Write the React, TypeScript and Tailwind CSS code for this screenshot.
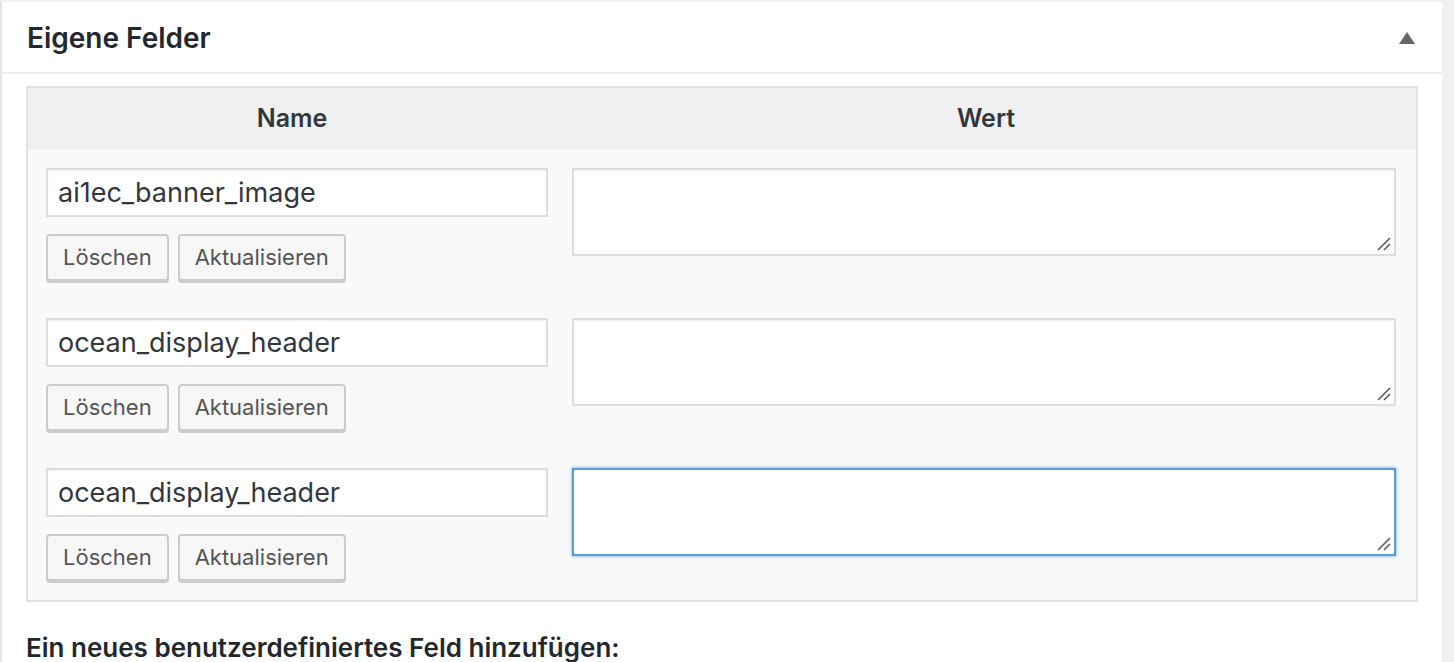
import React from "react";

const rows = [
  { key: "ai1ec_banner_image", focused: false },
  { key: "ocean_display_header", focused: false },
  { key: "ocean_display_header", focused: true },
];

function Grip() {
  return (
    <svg width="14" height="14" viewBox="0 0 14 14" className="pointer-events-none absolute bottom-[5px] right-[25px]">
      <path d="M1 13 L13 1 M7 13 L13 7" stroke="#555555" strokeWidth="1.5" />
    </svg>
  );
}

function MetaRow({ name, focused }: { name: string; focused: boolean }) {
  return (
    <div className="grid grid-cols-[528px_1fr]">
      <div className="pb-[19px] pl-[18px] pr-[8px] pt-[18px]">
        <input
          type="text"
          defaultValue={name}
          className="h-[49px] w-full border-2 border-[#dddddd] bg-white px-[10px] text-[27px] text-[#32373c] shadow-[inset_0_1px_2px_rgba(0,0,0,.07)] outline-none"
        />
        <div className="mt-[17px] flex gap-[9px]">
          <button className="h-[47px] rounded-[4px] border-2 border-[#cccccc] bg-[#f7f7f7] px-[15px] text-[22px] text-[#555555] shadow-[0_2px_0_#cccccc]">
            Löschen
          </button>
          <button className="h-[47px] rounded-[4px] border-2 border-[#cccccc] bg-[#f7f7f7] px-[15px] text-[22px] text-[#555555] shadow-[0_2px_0_#cccccc]">
            Aktualisieren
          </button>
        </div>
      </div>
      <div className="relative pl-[16px] pr-[20px] pt-[18px]">
        <textarea
          className={
            focused
              ? "block h-[88px] w-full resize-none border-2 border-[#5b9dd9] bg-white shadow-[0_0_3px_rgba(30,140,190,.8)] outline-none"
              : "block h-[88px] w-full resize-none border-2 border-[#dddddd] bg-white shadow-[inset_0_1px_2px_rgba(0,0,0,.07)] outline-none"
          }
        />
        <div className="absolute right-0 top-[18px] h-[88px] w-0">
          <Grip />
        </div>
      </div>
    </div>
  );
}

export default function App() {
  return (
    <div className="h-[662px] overflow-hidden bg-[#f1f1f1] pr-[12px] pt-[2px] font-['Inter','Liberation_Sans',sans-serif]">
      <div className="h-[700px] border-l-2 border-[#e5e5e5] bg-white">
        {/* postbox header */}
        <div className="flex h-[72px] items-center justify-between border-b-2 border-[#eeeeee] pl-[25px] pr-[27px]">
          <h2 className="mt-[2px] text-[28px] font-semibold text-[#23282d]">Eigene Felder</h2>
          <svg width="16" height="12" viewBox="0 0 16 12" className="mt-[1px]">
            <path d="M8 0 L16 12 L0 12 Z" fill="#666666" />
          </svg>
        </div>

        <div className="px-[24px] pt-[12px]">
          <div className="border-2 border-[#e1e1e1] bg-[#f9f9f9]">
            <div className="grid h-[62px] grid-cols-[528px_1fr] items-center bg-[#f0f0f0] text-[25px] font-semibold text-[#32373c]">
              <div className="text-center">Name</div>
              <div className="text-center">Wert</div>
            </div>
            {rows.map((r, i) => (
              <MetaRow key={i} name={r.key} focused={r.focused} />
            ))}
          </div>

          <p className="mt-[26px] text-[26px] font-semibold text-[#23282d]">
            Ein neues benutzerdefiniertes Feld hinzufügen:
          </p>
        </div>
      </div>
    </div>
  );
}
